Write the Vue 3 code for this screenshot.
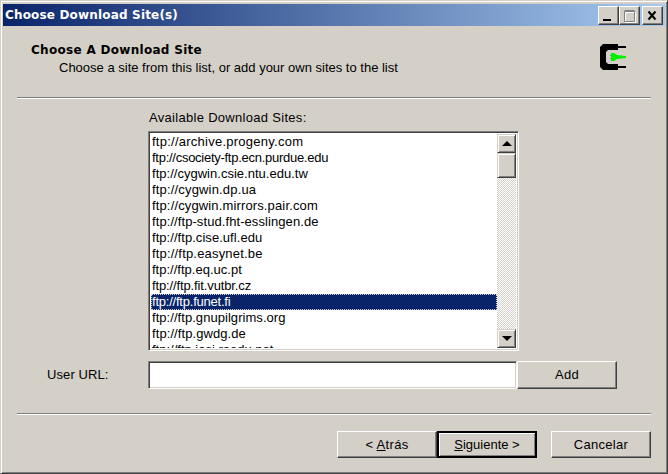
<script setup>
const sites = [
  { url: 'ftp://archive.progeny.com', track: 0.25 },
  { url: 'ftp://csociety-ftp.ecn.purdue.edu', track: -0.27 },
  { url: 'ftp://cygwin.csie.ntu.edu.tw', track: 0.02 },
  { url: 'ftp://cygwin.dp.ua', track: 0.17 },
  { url: 'ftp://cygwin.mirrors.pair.com', track: 0.14 },
  { url: 'ftp://ftp-stud.fht-esslingen.de', track: 0.08 },
  { url: 'ftp://ftp.cise.ufl.edu', track: 0.05 },
  { url: 'ftp://ftp.easynet.be', track: 0.18 },
  { url: 'ftp://ftp.eq.uc.pt', track: 0.01 },
  { url: 'ftp://ftp.fit.vutbr.cz', track: -0.13 },
  { url: 'ftp://ftp.funet.fi', track: -0.22 },
  { url: 'ftp://ftp.gnupilgrims.org', track: 0.05 },
  { url: 'ftp://ftp.gwdg.de', track: 0.08 },
  { url: 'ftp://ftp.iasi.roedu.net', track: 0 }
]
const selected = 'ftp://ftp.funet.fi'
</script>

<template>
  <div class="window">
    <div class="titlebar">
      <span class="title">Choose Download Site(s)</span>
      <div class="controls">
        <button class="ctl"><svg width="19" height="17" viewBox="0 0 19 17"><rect x="4" y="12" width="8" height="2" fill="#000"/></svg></button>
        <button class="ctl"><svg width="19" height="17" viewBox="0 0 19 17"><path d="M5.5 5.5h10v10h-10z" fill="none" stroke="#fff"/><path d="M4.5 4.5h10v10h-10z M4.5 3.5h10" fill="none" stroke="#808080"/></svg></button>
        <button class="ctl close"><svg width="19" height="17" viewBox="0 0 19 17"><path d="M5.5 4.5l7 8M12.5 4.5l-7 8" fill="none" stroke="#000" stroke-width="2"/></svg></button>
      </div>
    </div>
    <div class="body">
      <header class="head">
        <div class="head-text">
          <h1>Choose A Download Site</h1>
          <p>Choose a site from this list, or add your own sites to the list</p>
        </div>
        <svg class="logo" width="28" height="28" viewBox="0 0 28 28">
          <path d="M3 1H18V3H26V5H18V7H8L6 9V19L8 21H18V23H26V25H18V27H3L0 24V4Z" fill="#000"/>
          <path d="M10 12h1v-2h3l3 2 9 1v2l-9 1-3 2h-3v-2h-1v-1h1v-2h-1z" fill="#00f000"/>
        </svg>
      </header>
      <div class="rule"></div>
      <section class="picker">
        <div class="label">Available Download Sites:</div>
        <div class="listbox">
          <ul class="items">
            <li
              v-for="s in sites"
              :key="s.url"
              :class="{ sel: s.url === selected }"
              :style="{ letterSpacing: s.track + 'px' }"
            >{{ s.url }}</li>
          </ul>
          <div class="scroll">
            <button class="arrow"><i class="up"></i></button>
            <button class="thumb"></button>
            <div class="track"></div>
            <button class="arrow"><i class="down"></i></button>
          </div>
        </div>
      </section>
      <div class="url-row">
        <label>User URL:</label>
        <div class="url-input"></div>
        <button class="btn add">Add</button>
      </div>
      <div class="rule second"></div>
      <footer class="actions">
        <button class="btn nav"><span>&lt; <u>A</u>trás</span></button>
        <button class="btn nav primary"><span><u>S</u>iguiente &gt;</span></button>
        <button class="btn nav cancel">Cancelar</button>
      </footer>
    </div>
  </div>
</template>

<style>
html, body { margin: 0; background: #d4d0c8; }
</style>

<style scoped>
.window {
  width: 668px; height: 474px; box-sizing: border-box;
  background: #d4d0c8;
  border: 1px solid; border-color: #d4d0c8 #404040 #404040 #d4d0c8;
  box-shadow: inset 1px 1px 0 #fff, inset -1px -1px 0 #808080;
  padding: 3px 2px 2px 2px;
  font-family: "Liberation Sans", Arial, sans-serif;
  font-size: 13px; color: #000;
  display: flex; flex-direction: column;
  overflow: hidden;
}
.titlebar {
  height: 22px; flex: none; display: flex; align-items: center; justify-content: space-between;
  background: linear-gradient(90deg, #0a246a, #a6caf0);
  padding: 0 2px;
}
.title { color: #fff; font: bold 12px "DejaVu Sans", sans-serif; letter-spacing: 0.17px; }
.controls { display: flex; margin-top: 1px; }
.ctl {
  width: 21px; height: 19px; padding: 0; box-sizing: border-box; background: #d4d0c8;
  border: 1px solid; border-color: #fff #404040 #404040 #fff;
  box-shadow: inset -1px -1px 0 #808080;
  display: flex; align-items: center; justify-content: center;
}
.close { margin-left: 2px; }
.body { flex: 1; display: flex; flex-direction: column; padding: 0 14px; }
.head { height: 71px; flex: none; display: flex; justify-content: space-between; box-sizing: border-box; padding: 16px 0 0 14px; }
.head h1 { margin: 0; font: bold 12px/16px "DejaVu Sans", sans-serif; letter-spacing: 0.3px; }
.head p { margin: 2px 0 0 28px; font-size: 13px; line-height: 16px; }
.logo { margin: 1px 23px 0 0; }
.rule { height: 2px; flex: none; background: linear-gradient(#808080 50%, #fff 50%); }
.picker { margin-left: 131px; margin-top: 11px; width: 371px; }
.label { line-height: 16px; height: 21px; margin-left: 1px; letter-spacing: 0.3px; }
.listbox {
  width: 371px; height: 220px; box-sizing: border-box; display: flex; background: #fff;
  border: 1px solid; border-color: #808080 #fff #fff #808080;
  box-shadow: inset 1px 1px 0 #404040, inset -1px -1px 0 #d4d0c8;
  padding: 2px; overflow: hidden;
}
.items { list-style: none; margin: 0; padding: 0; flex: 1; overflow: hidden; }
.items li { height: 16px; line-height: 16px; padding-left: 1px; white-space: nowrap; }
.items li.sel { background: #0a246a; color: #fff; outline: 1px dotted #d4d0c8; outline-offset: -1px; }
.scroll { width: 19px; display: flex; flex-direction: column; flex: none; }
.arrow, .thumb {
  width: 19px; height: 19px; padding: 0; box-sizing: border-box; flex: none; background: #d4d0c8;
  border: 1px solid; border-color: #d4d0c8 #404040 #404040 #d4d0c8;
  box-shadow: inset 1px 1px 0 #fff, inset -1px -1px 0 #808080;
  display: flex; align-items: center; justify-content: center;
}
.thumb { height: 25px; }
.track { flex: 1; background: repeating-conic-gradient(#fff 0 25%, #d4d0c8 0 50%) 0 0 / 2px 2px; }
.up, .down { width: 0; height: 0; border-left: 5px solid transparent; border-right: 5px solid transparent; }
.up { border-bottom: 5px solid #000; }
.down { border-top: 5px solid #000; }
.url-row { display: flex; align-items: center; margin-top: 10px; height: 28px; }
.url-row label { width: 131px; box-sizing: border-box; padding: 0 0 2px 30px; letter-spacing: 0.1px; }
.url-input {
  width: 369px; height: 28px; box-sizing: border-box; background: #fff;
  border: 1px solid; border-color: #808080 #fff #fff #808080;
  box-shadow: inset 1px 1px 0 #404040, inset -1px -1px 0 #d4d0c8;
}
.btn {
  box-sizing: border-box; background: #d4d0c8; padding: 0; color: #000;
  font: 13px "Liberation Sans", Arial, sans-serif;
  letter-spacing: 0.3px;
  border: 1px solid; border-color: #fff #404040 #404040 #fff;
  box-shadow: inset -1px -1px 0 #808080;
}
.add { width: 100px; height: 28px; padding-bottom: 1px; }
.second { margin-top: 24px; }
.actions { display: flex; justify-content: flex-end; margin-top: 16px; }
.nav { width: 100px; height: 27px; }
.primary { border: 2px solid #000; box-shadow: inset 1px 1px 0 #fff, inset -1px -1px 0 #808080; letter-spacing: 0; }
.cancel { margin-left: 14px; }
</style>
